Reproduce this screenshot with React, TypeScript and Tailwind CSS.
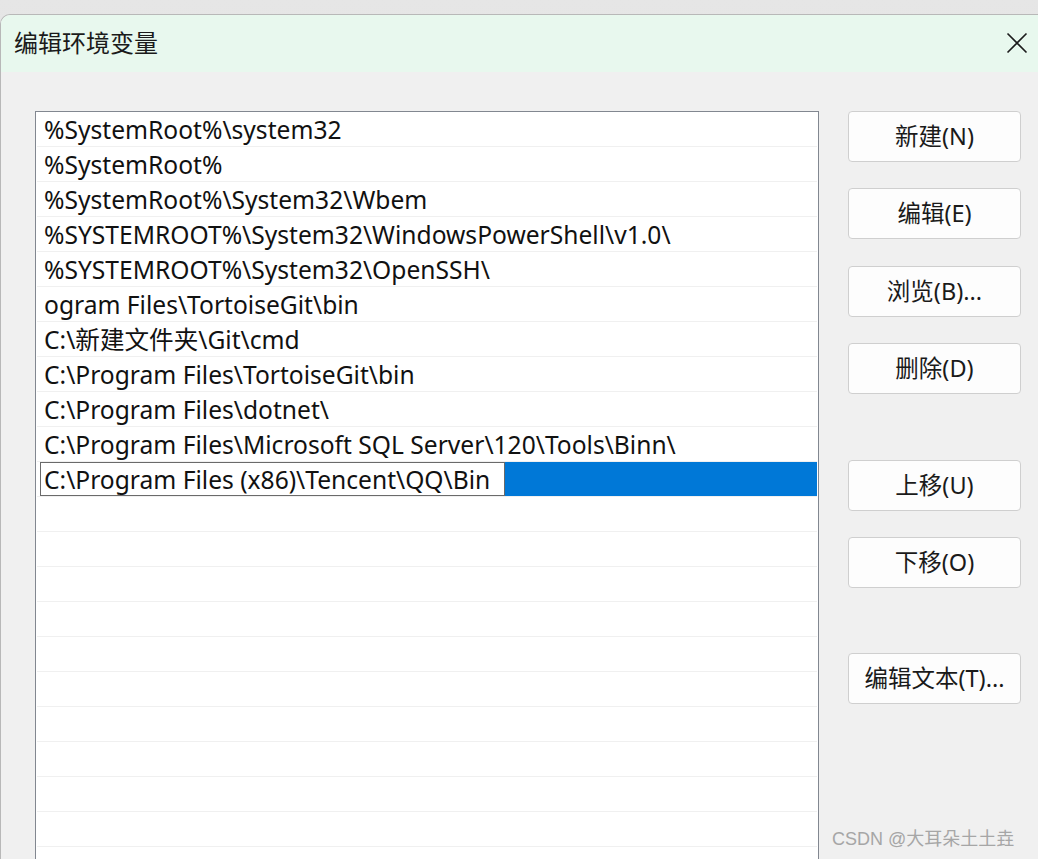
import React from "react";

const rows = [
  "%SystemRoot%\\system32",
  "%SystemRoot%",
  "%SystemRoot%\\System32\\Wbem",
  "%SYSTEMROOT%\\System32\\WindowsPowerShell\\v1.0\\",
  "%SYSTEMROOT%\\System32\\OpenSSH\\",
  "ogram Files\\TortoiseGit\\bin",
  "C:\\新建文件夹\\Git\\cmd",
  "C:\\Program Files\\TortoiseGit\\bin",
  "C:\\Program Files\\dotnet\\",
  "C:\\Program Files\\Microsoft SQL Server\\120\\Tools\\Binn\\",
];

const font = { fontFamily: '"Noto Sans", "Noto Sans CJK SC", sans-serif' };

function Btn({ label, className = "" }: { label: string; className?: string }) {
  return (
    <div
      className={
        "w-[173px] h-[51px] flex items-center justify-center bg-[#fdfdfd] border border-[#cfcfcf] rounded-[4px] text-[23.5px] text-[#1a1a1a] leading-none " +
        className
      }
    >
      {label}
    </div>
  );
}

export default function App() {
  return (
    <div
      className="relative w-[1038px] h-[859px] overflow-hidden bg-gradient-to-b from-[#e6e6e6] to-[#d6d6d6]"
      style={font}
    >
      <div className="mt-[14px] h-[845px] rounded-tl-[10px] border-t border-l border-[#b8b8b8] bg-[#f0f0f0] flex flex-col overflow-hidden">
        <div className="h-[57px] shrink-0 bg-[#e8f8ee] flex items-center justify-between pl-[13px] pr-[10px] pb-[2px]">
          <span className="text-[24px] text-[#1b1b1b] leading-none">编辑环境变量</span>
          <svg width="22" height="22" viewBox="0 0 22 22">
            <path d="M1.5 1.5 L20.5 20.5 M20.5 1.5 L1.5 20.5" stroke="#1c1c1c" strokeWidth="1.6" fill="none" />
          </svg>
        </div>
        <div className="flex pl-[34px] pt-[39px]">
          <div className="w-[784px] h-[760px] shrink-0 border border-[#828790] bg-white px-[1px] text-[24.6px] text-[#111]">
            {rows.map((r, i) => (
              <div key={i} className="h-[35px] border-b border-[#f0f0f0] flex items-center pl-[7px] pt-[3px] whitespace-nowrap leading-none">
                {r}
              </div>
            ))}
            <div className="h-[35px] border-b border-[#f0f0f0] flex items-stretch">
              <div className="w-[465px] ml-[3px] border border-[#6a6a6a] bg-white flex items-center pl-[3px] pt-[3px] whitespace-nowrap leading-none">
                C:\Program Files (x86)\Tencent\QQ\Bin
              </div>
              <div className="flex-1 bg-[#0078d7]"></div>
            </div>
            {Array.from({ length: 10 }).map((_, i) => (
              <div key={"e" + i} className="h-[35px] border-b border-[#f0f0f0]"></div>
            ))}
          </div>
          <div className="ml-[29px] flex flex-col">
            <Btn label="新建(N)" />
            <Btn label="编辑(E)" className="mt-[26px]" />
            <Btn label="浏览(B)..." className="mt-[27px]" />
            <Btn label="删除(D)" className="mt-[26px]" />
            <Btn label="上移(U)" className="mt-[66px]" />
            <Btn label="下移(O)" className="mt-[26px]" />
            <Btn label="编辑文本(T)..." className="mt-[65px]" />
          </div>
        </div>
      </div>
      <div
        className="absolute left-[832px] top-[830px] text-[18px] text-[#a6a6a6] leading-none whitespace-nowrap"
        style={{ fontFamily: '"Liberation Sans", "Noto Sans CJK SC", sans-serif' }}
      >
        CSDN @大耳朵土土垚
      </div>
    </div>
  );
}
